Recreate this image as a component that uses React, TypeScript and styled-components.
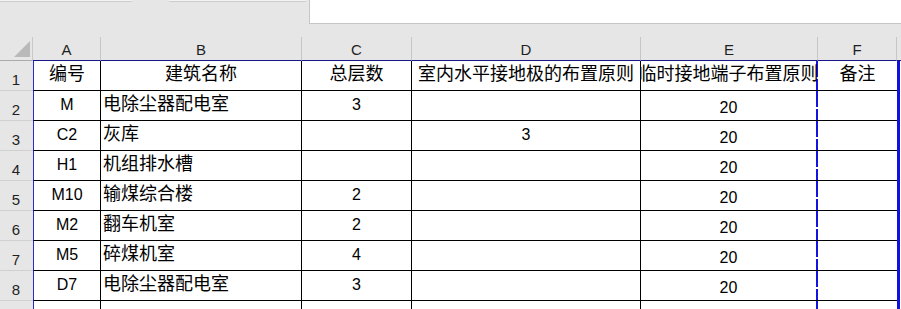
import React from "react";
import styled, { createGlobalStyle, css } from "styled-components";

const Global = createGlobalStyle`
  html, body { margin: 0; padding: 0; background: #ffffff; }
  body { width: 901px; height: 309px; overflow: hidden; }
  #root { width: 901px; height: 309px; overflow: hidden; }
`;

const Page = styled.div`
  width: 901px;
  height: 309px;
  display: flex;
  flex-direction: column;
  background: #ffffff;
`;

const TopArea = styled.div`
  height: 37px;
  flex: none;
  background: #e6e6e6;
  display: flex;
  align-items: flex-start;
`;

const Strip = styled.div<{ $w: number; $ml: number }>`
  width: ${(p) => p.$w}px;
  margin-left: ${(p) => p.$ml}px;
  height: 1px;
  background: #f3f3f3;
  border-bottom: 1px solid #cdcdcd;
`;

const FormulaBox = styled.div`
  margin-left: 3px;
  flex: 1;
  height: 24px;
  box-sizing: border-box;
  background: #ffffff;
  border-left: 1px solid #c6c6c6;
  border-bottom: 1px solid #c6c6c6;
`;

const Sheet = styled.div`
  display: grid;
  width: 901px;
  grid-template-columns: 33px 68px 201px 110px 229px 177px 79px 4px;
  grid-template-rows: 24px repeat(9, 30px);
  background: #ffffff;
`;

const Corner = styled.div`
  box-sizing: border-box;
  background: #e6e6e6;
  border-right: 1px solid #c8c8c8;
  border-bottom: 1px solid #ababab;
  display: flex;
  justify-content: flex-end;
  align-items: flex-end;
  padding: 0 2px 3px 0;
`;

const ColHeader = styled.div`
  box-sizing: border-box;
  background: #e6e6e6;
  border-right: 1px solid #c6c6c6;
  border-bottom: 1px solid #17178a;
  display: flex;
  justify-content: center;
  align-items: center;
  padding-top: 2px;
  font-family: "Liberation Sans", Arial, sans-serif;
  font-size: 15px;
  line-height: 17px;
  color: #1f1f1f;
`;

const RowHeader = styled.div`
  box-sizing: border-box;
  background: #e6e6e6;
  border-bottom: 1px solid #d0d0d0;
  display: flex;
  justify-content: center;
  align-items: flex-end;
  padding: 0 1px 2px 0;
  font-family: "Liberation Sans", Arial, sans-serif;
  font-size: 15px;
  line-height: 17px;
  color: #1f1f1f;
`;

type Kind = "cjk" | "num" | "numLow";
type Edge = "first" | "dashed" | "plain" | "open";

const Cell = styled.div<{
  $kind: Kind;
  $align: "left" | "center";
  $edge: Edge;
  $clip?: boolean;
}>`
  box-sizing: border-box;
  min-width: 0;
  overflow: ${(p) => (p.$clip ? "hidden" : "visible")};
  white-space: nowrap;
  display: flex;
  align-items: flex-end;
  justify-content: ${(p) => (p.$align === "left" ? "flex-start" : "center")};
  padding-left: ${(p) => (p.$align === "left" ? "2px" : "0")};
  border-bottom: 1px solid #000000;
  border-right: 1px solid #000000;
  color: #000000;
  ${(p) =>
    p.$kind === "cjk"
      ? css`
          font-family: "Noto Sans CJK SC", "Microsoft YaHei", sans-serif;
          font-size: 18px;
          line-height: 22px;
          padding-bottom: 7px;
        `
      : css`
          font-family: "Liberation Sans", Arial, sans-serif;
          font-size: 16px;
          line-height: 18px;
          padding-bottom: ${p.$kind === "numLow" ? "3px" : "6px"};
        `}
  ${(p) =>
    p.$edge === "first" &&
    css`
      border-left: 1px solid #2a2ad0;
    `}
  ${(p) =>
    p.$edge === "dashed" &&
    css`
      border-right: none;
      padding-right: 2px;
      background: repeating-linear-gradient(
          to bottom,
          #1414e0 0 16px,
          transparent 16px 18px
        )
        right top / 2px 100% no-repeat;
    `}
  ${(p) =>
    p.$edge === "open" &&
    css`
      border-right: none;
    `}
`;

const PageEdge = styled.div`
  width: 4px;
  background: linear-gradient(to right, #1010e0 0 3px, #ffffff 3px 4px);
`;

const HeaderTail = styled.div`
  box-sizing: border-box;
  background: #e6e6e6;
  border-bottom: 1px solid #17178a;
`;

const Triangle = () => (
  <svg width="16" height="16" viewBox="0 0 16 16">
    <polygon points="16,0 16,16 0,16" fill="#b9b9b9" />
  </svg>
);

const columns = ["A", "B", "C", "D", "E", "F"];

type Row = [string, string, string, string, string, string];

const header: Row = [
  "编号",
  "建筑名称",
  "总层数",
  "室内水平接地极的布置原则",
  "临时接地端子布置原则",
  "备注",
];

const rows: Row[] = [
  ["M", "电除尘器配电室", "3", "", "20", ""],
  ["C2", "灰库", "", "3", "20", ""],
  ["H1", "机组排水槽", "", "", "20", ""],
  ["M10", "输煤综合楼", "2", "", "20", ""],
  ["M2", "翻车机室", "2", "", "20", ""],
  ["M5", "碎煤机室", "4", "", "20", ""],
  ["D7", "电除尘器配电室", "3", "", "20", ""],
  ["", "", "", "", "", ""],
];

const edgeFor = (i: number): Edge =>
  i === 0 ? "first" : i === 4 ? "dashed" : i === 5 ? "open" : "plain";

export default function App() {
  return (
    <Page>
      <Global />
      <TopArea>
        <Strip $w={132} $ml={0} />
        <Strip $w={137} $ml={37} />
        <FormulaBox />
      </TopArea>
      <Sheet>
        <Corner>
          <Triangle />
        </Corner>
        {columns.map((c) => (
          <ColHeader key={c}>{c}</ColHeader>
        ))}
        <HeaderTail />

        <RowHeader>1</RowHeader>
        {header.map((t, i) => (
          <Cell
            key={i}
            $kind="cjk"
            $align="center"
            $edge={edgeFor(i)}
            $clip={i === 4}
          >
            {t}
          </Cell>
        ))}
        <PageEdge />

        {rows.map((r, ri) => (
          <React.Fragment key={ri}>
            <RowHeader>{ri + 2}</RowHeader>
            {r.map((t, i) => (
              <Cell
                key={i}
                $kind={i === 1 ? "cjk" : i === 4 ? "numLow" : "num"}
                $align={i === 1 ? "left" : "center"}
                $edge={edgeFor(i)}
              >
                {t}
              </Cell>
            ))}
            <PageEdge />
          </React.Fragment>
        ))}
      </Sheet>
    </Page>
  );
}
